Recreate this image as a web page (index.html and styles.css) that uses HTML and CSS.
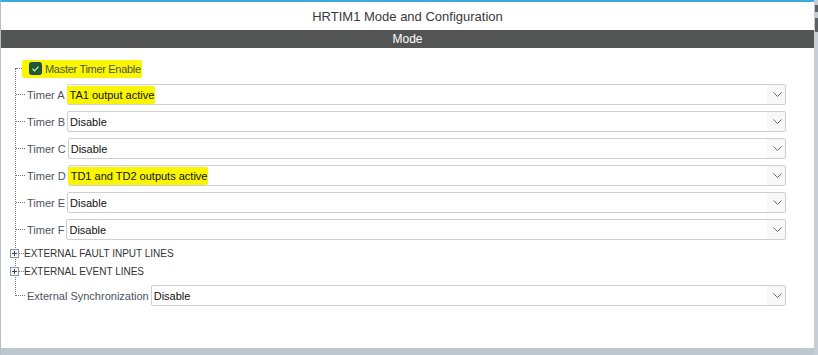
FILE: index.html
```html
<!DOCTYPE html>
<html lang="en">
<head>
    <meta charset="UTF-8">
    <title>HRTIM1 Mode and Configuration</title>
    <link rel="stylesheet" href="styles.css">
</head>
<body>
    <div class="frame">
        <div class="panel">
            <div class="title">HRTIM1 Mode and Configuration</div>
            <div class="bar">Mode</div>

            <div class="content">
                <div class="tree">
                    <div class="row row-check">
                        <span class="mark check-mark">
                            <svg class="checkbox" width="13" height="13" viewBox="0 0 13 13">
                                <rect x="0.5" y="0.5" width="12" height="12" rx="2" fill="#1f5a2e" stroke="#22416a"/>
                                <path d="M3.5 6.8 L5.6 8.8 L9.5 4.6" fill="none" stroke="#cfeacb" stroke-width="1.2"/>
                            </svg>
                            <span>Master Timer Enable</span>
                        </span>
                    </div>

                    <div class="row row-field">
                        <span class="label">Timer A</span>
                        <div class="select">
                            <span class="value"><span class="mark">TA1 output active</span></span>
                            <svg class="chev" width="9" height="5" viewBox="0 0 9 5"><path d="M0.5 0.5 L4.5 4.5 L8.5 0.5" fill="none" stroke="#666"/></svg>
                        </div>
                    </div>
                    <div class="row row-field">
                        <span class="label">Timer B</span>
                        <div class="select">
                            <span class="value">Disable</span>
                            <svg class="chev" width="9" height="5" viewBox="0 0 9 5"><path d="M0.5 0.5 L4.5 4.5 L8.5 0.5" fill="none" stroke="#666"/></svg>
                        </div>
                    </div>
                    <div class="row row-field">
                        <span class="label">Timer C</span>
                        <div class="select">
                            <span class="value">Disable</span>
                            <svg class="chev" width="9" height="5" viewBox="0 0 9 5"><path d="M0.5 0.5 L4.5 4.5 L8.5 0.5" fill="none" stroke="#666"/></svg>
                        </div>
                    </div>
                    <div class="row row-field">
                        <span class="label">Timer D</span>
                        <div class="select">
                            <span class="value"><span class="mark">TD1 and TD2 outputs active</span></span>
                            <svg class="chev" width="9" height="5" viewBox="0 0 9 5"><path d="M0.5 0.5 L4.5 4.5 L8.5 0.5" fill="none" stroke="#666"/></svg>
                        </div>
                    </div>
                    <div class="row row-field">
                        <span class="label">Timer E</span>
                        <div class="select">
                            <span class="value">Disable</span>
                            <svg class="chev" width="9" height="5" viewBox="0 0 9 5"><path d="M0.5 0.5 L4.5 4.5 L8.5 0.5" fill="none" stroke="#666"/></svg>
                        </div>
                    </div>
                    <div class="row row-field">
                        <span class="label">Timer F</span>
                        <div class="select">
                            <span class="value">Disable</span>
                            <svg class="chev" width="9" height="5" viewBox="0 0 9 5"><path d="M0.5 0.5 L4.5 4.5 L8.5 0.5" fill="none" stroke="#666"/></svg>
                        </div>
                    </div>

                    <div class="row row-group first-group">
                        <svg class="plus" width="9" height="9" viewBox="0 0 9 9">
                            <rect x="0.5" y="0.5" width="8" height="8" fill="#f6f7f8" stroke="#8a949e"/>
                            <path d="M2 4.5 H7 M4.5 2 V7" stroke="#36435a"/>
                        </svg>
                        <span class="group-name">EXTERNAL FAULT INPUT LINES</span>
                    </div>
                    <div class="row row-group">
                        <svg class="plus" width="9" height="9" viewBox="0 0 9 9">
                            <rect x="0.5" y="0.5" width="8" height="8" fill="#f6f7f8" stroke="#8a949e"/>
                            <path d="M2 4.5 H7 M4.5 2 V7" stroke="#36435a"/>
                        </svg>
                        <span class="group-name">EXTERNAL EVENT LINES</span>
                    </div>

                    <div class="row row-field row-last">
                        <span class="label">External Synchronization</span>
                        <div class="select">
                            <span class="value">Disable</span>
                            <svg class="chev" width="9" height="5" viewBox="0 0 9 5"><path d="M0.5 0.5 L4.5 4.5 L8.5 0.5" fill="none" stroke="#666"/></svg>
                        </div>
                    </div>
                </div>
            </div>

            <div class="footer"></div>
        </div>
        <div class="scroll">
            <span class="nub"></span>
            <span class="nub nub-low"></span>
        </div>
    </div>
</body>
</html>
```

FILE: styles.css
```css
body {
    margin: 0;
    font-family: "Liberation Sans", Arial, sans-serif;
    background: #fff;
}
.frame {
    display: flex;
    width: 818px;
    height: 355px;
}
.panel {
    width: 814px;
    box-sizing: border-box;
    border-left: 1px solid #b4bfc7;
    border-top: 2px solid #3ba9dd;
    display: flex;
    flex-direction: column;
}
.title {
    height: 28px;
    display: flex;
    align-items: center;
    justify-content: center;
    font-size: 13px;
    color: #3a3a3a;
}
.bar {
    height: 18px;
    background: #535554;
    color: #fff;
    font-size: 12px;
    display: flex;
    align-items: center;
    justify-content: center;
}
.content {
    flex: 1;
    padding-top: 11px;
}
.footer {
    height: 7px;
    background: #bcc7ce;
}
.scroll {
    width: 4px;
    background: #c5ced4;
    display: flex;
    flex-direction: column;
    align-items: flex-end;
}
.nub {
    width: 3px;
    height: 7px;
    margin-top: 5px;
    background: #5d6266;
}
.nub-low {
    height: 14px;
    margin-top: 6px;
}

/* tree */
.tree {
    position: relative;
    margin-left: 14px;
    margin-right: 28px;
}
.tree::before {
    content: "";
    position: absolute;
    left: 0;
    top: 9px;
    bottom: 10px;
    border-left: 1px dotted #777;
}
.row {
    display: flex;
    align-items: center;
    padding-left: 1px;
}
.row::before {
    content: "";
    flex: none;
    width: 9px;
    border-top: 1px dotted #777;
}
.row-check {
    height: 19px;
}
.row-check::before {
    width: 6px;
}
.row-field {
    height: 21px;
    margin-top: 6px;
}
.label {
    margin-left: 2px;
    margin-right: 2px;
    font-size: 11px;
    color: #4a5461;
    white-space: nowrap;
}
.mark {
    background: #faf500;
    border-radius: 2px;
}
.check-mark {
    display: flex;
    align-items: center;
    gap: 3px;
    height: 18px;
    padding: 0 1px 0 7px;
    font-size: 11px;
    letter-spacing: -0.3px;
    color: #4a5548;
}
.checkbox {
    display: block;
}
.select {
    flex: 1;
    height: 21px;
    box-sizing: border-box;
    border: 1px solid #cfcfcf;
    border-radius: 2px;
    display: flex;
    align-items: center;
    padding-left: 2px;
    font-size: 11px;
    color: #111;
    background: linear-gradient(to right, #fff calc(100% - 18px), #f8f8f8 calc(100% - 18px));
}
.value .mark {
    display: inline-block;
    height: 18px;
    line-height: 18px;
    margin-left: -3px;
    padding: 0 1px 0 3px;
}
.chev {
    display: block;
    margin-left: auto;
    margin-right: 3px;
}
.row-group {
    height: 16px;
    margin-top: 2px;
}
.first-group {
    margin-top: 5px;
}
.row-group::before {
    order: 1;
    width: 5px;
}
.plus {
    position: relative;
    order: 0;
    display: block;
    margin-left: -6px;
}
.group-name {
    order: 2;
    font-size: 10px;
    color: #333;
    white-space: nowrap;
}
.row-last {
    margin-top: 6px;
}
```
